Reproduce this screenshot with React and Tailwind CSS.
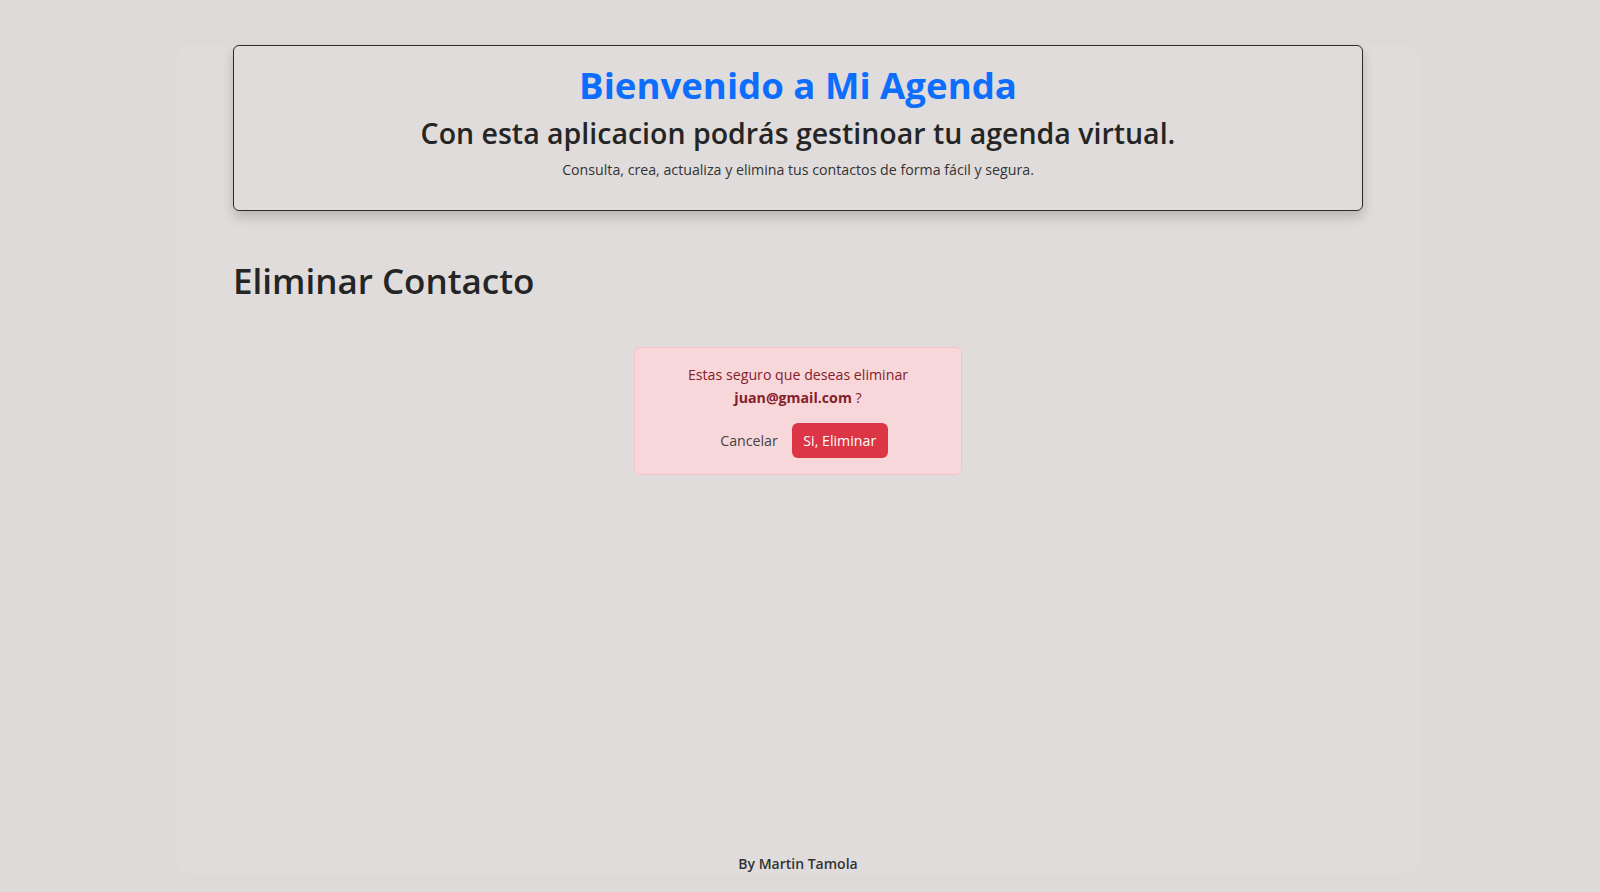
import React from 'react';

const App = () => {
  return (
    <div className="min-h-screen w-full bg-[#dcdbda] pt-[45px] font-['Open_Sans',sans-serif] text-[#212529]">
      <div className="ml-[176px] flex h-[829px] w-[1244px] flex-col rounded-2xl bg-[#e0dcdb] px-[57px]">
        {/* Header */}
        <header className="flex h-[166px] flex-col items-center rounded-md border border-[#2b2b2b] bg-[#e0dcdb] pt-[15px] shadow-[0_6px_12px_rgba(0,0,0,0.18)]">
          <h1 className="text-[36.6px] font-bold leading-[48px] text-[#0d6efd]">Bienvenido a Mi Agenda</h1>
          <h2 className="mt-[5px] text-[28.5px] font-semibold leading-[38px] text-[#252525]">
            Con esta aplicacion podrás gestinoar tu agenda virtual.
          </h2>
          <p className="mt-[7px] text-[14.2px] leading-[21px] text-[#333]">
            Consulta, crea, actualiza y elimina tus contactos de forma fácil y segura.
          </p>
        </header>

        {/* Page title */}
        <h1 className="mt-[46px] text-[35px] font-semibold leading-[48px] text-[#252525]">Eliminar Contacto</h1>

        {/* Confirm alert */}
        <div className="mx-auto mt-[42px] flex w-[328px] flex-col items-center rounded-md border border-[#f5c2c7] bg-[#f8d7da] px-4 pb-[16px] pt-[15px] text-center text-[14.2px] text-[#842029]">
          <p className="leading-[23px]">Estas seguro que deseas eliminar</p>
          <p className="leading-[23px]">
            <span className="font-bold">juan@gmail.com</span> ?
          </p>
          <div className="mt-[14px] flex items-center gap-[2px]">
            <button className="h-[35px] rounded-md px-3 text-[14.2px] text-[#444]">Cancelar</button>
            <button className="h-[35px] w-[96px] rounded-md bg-[#dc3545] text-[14.2px] text-white">Si, Eliminar</button>
          </div>
        </div>

        {/* Footer */}
        <footer className="mt-auto text-center text-[14px] font-semibold leading-[20px] text-[#333]">
          By Martin Tamola
        </footer>
      </div>
    </div>
  );
};

export default App;
